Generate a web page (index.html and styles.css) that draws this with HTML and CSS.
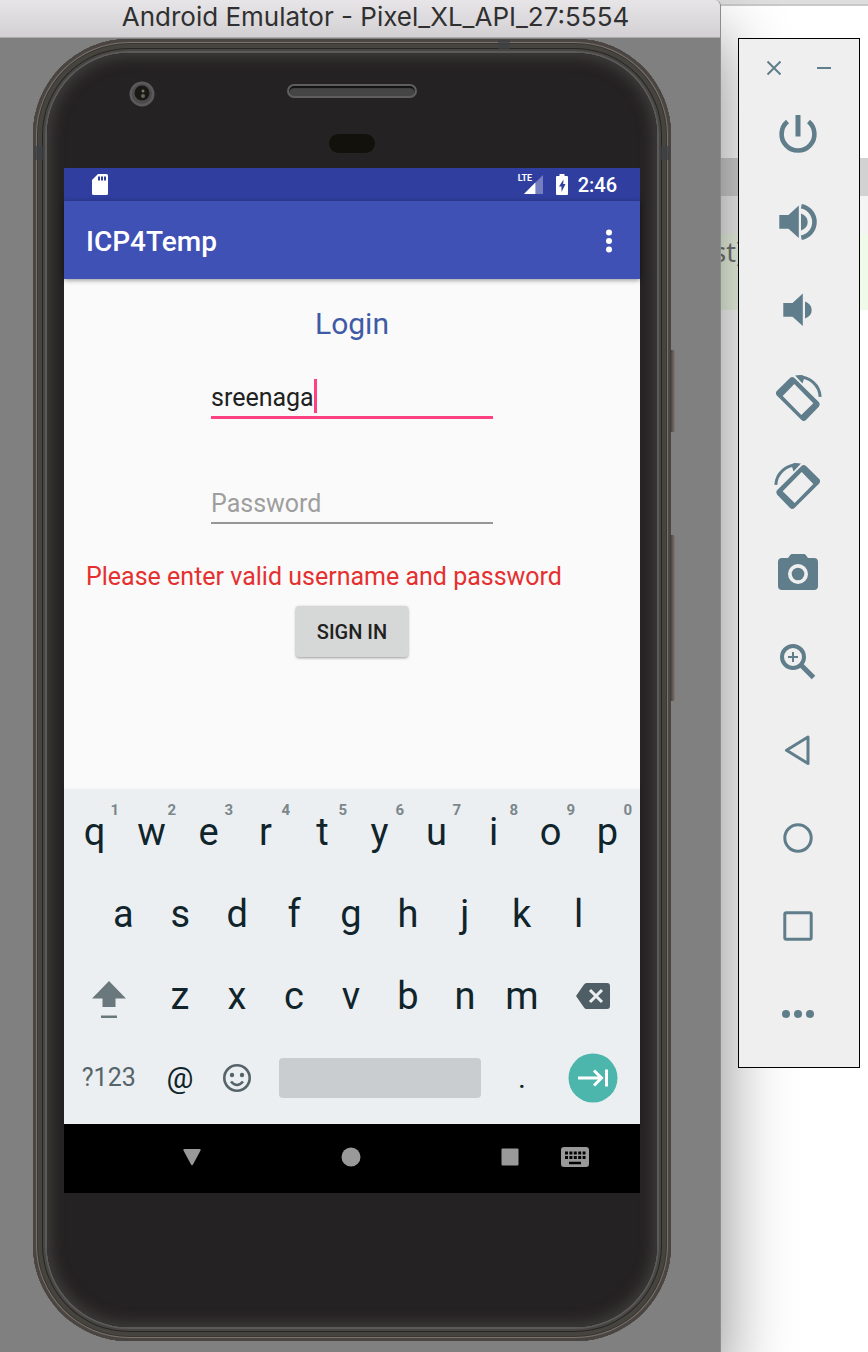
FILE: index.html
```html
<!DOCTYPE html>
<html lang="en">
<head>
<meta charset="utf-8">
<title>Android Emulator - Pixel_XL_API_27:5554</title>
<link rel="stylesheet" href="styles.css">
</head>
<body>
<div class="desktop">
  <div class="backdrop" aria-hidden="true">
    <div class="band band-top"></div>
    <div class="band band-blank"></div>
    <div class="band band-grey"></div>
    <div class="band band-light"></div>
    <div class="band band-code">st)</div>
  </div>

  <main class="window">
    <header class="titlebar">Android Emulator - Pixel_XL_API_27:5554</header>
    <div class="stage">
      <div class="phone">
        <span class="side-key side-power"></span>
        <span class="side-key side-volume"></span>
        <span class="antenna antenna-top"></span>
        <span class="antenna antenna-left"></span>
        <span class="antenna antenna-right"></span>
        <div class="glass">
        <div class="forehead">
          <svg class="front-camera" viewBox="0 0 26 26"><circle cx="13" cy="13" r="12.500" fill="#5b5a5b"/><circle cx="13" cy="13" r="10" fill="#4c4b4c"/><circle cx="13" cy="12" r="7.500" fill="#1a1813"/><circle cx="14" cy="10" r="1.500" fill="#77756c"/><circle cx="14" cy="15" r="2" fill="#66645c"/></svg>
          <span class="earpiece"></span>
          <span class="sensor"></span>
        </div>

        <div class="screen">
          <div class="statusbar">
            <svg class="sd" viewBox="0 0 16 21"><path fill="#fff" d="M6 0h8.500Q16 0 16 1.500v18Q16 21 14.500 21h-13Q0 21 0 19.500V6z"/><path fill="#303f9f" d="M6 2.500h2v4H6zM9 2.500h2v4H9zM12 2.500h2v4h-2z"/></svg>
            <span class="signal"><span class="lte">LTE</span><svg viewBox="0 0 20 20"><path fill="#757fc0" d="M20 0v20H0z"/><path fill="#fff" d="M12 8v12H0z"/></svg></span>
            <svg class="battery" viewBox="0 0 12 21"><path fill="#fff" d="M3.500 0h5v2H11q1 0 1 1v17q0 1-1 1H1q-1 0-1-1V3q0-1 1-1h2.500z"/><path fill="#303f9f" d="M7.500 5.500L3 12.500h2.500v5.500L9.500 10H7.200z"/></svg>
            <time>2:46</time>
          </div>
          <div class="appbar">
            <h1>ICP4Temp</h1>
            <button class="more" aria-label="More options"><svg viewBox="0 0 6 24"><circle cx="3" cy="3.500" r="3"/><circle cx="3" cy="12" r="3"/><circle cx="3" cy="20.500" r="3"/></svg></button>
          </div>

          <form class="login" onsubmit="return false">
            <h2>Login</h2>
            <div class="field field-user">
              <input class="input input-active" type="text" aria-label="Username" value="sreenaga">
              <span class="caret"></span>
            </div>
            <div class="field field-pass">
              <input class="input" type="password" aria-label="Password" placeholder="Password">
            </div>
            <p class="error">Please enter valid username and password</p>
            <button class="signin" type="submit">SIGN IN</button>
          </form>

          <div class="keyboard">
            <div class="keyrow">
              <button class="key">q<sup>1</sup></button><button class="key">w<sup>2</sup></button><button class="key">e<sup>3</sup></button><button class="key">r<sup>4</sup></button><button class="key">t<sup>5</sup></button><button class="key">y<sup>6</sup></button><button class="key">u<sup>7</sup></button><button class="key">i<sup>8</sup></button><button class="key">o<sup>9</sup></button><button class="key">p<sup>0</sup></button>
            </div>
            <div class="keyrow keyrow-home">
              <button class="key">a</button><button class="key">s</button><button class="key">d</button><button class="key">f</button><button class="key">g</button><button class="key">h</button><button class="key">j</button><button class="key">k</button><button class="key">l</button>
            </div>
            <div class="keyrow">
              <button class="key key-wide" aria-label="Shift"><svg class="shift" viewBox="0 0 34 38"><path fill="#6a787e" d="M17 0l17 17.500H23.500V26h-13v-8.500H0zM9 34.500h16V37H9z"/></svg></button>
              <button class="key">z</button><button class="key">x</button><button class="key">c</button><button class="key">v</button><button class="key">b</button><button class="key">n</button><button class="key">m</button>
              <button class="key key-wide" aria-label="Delete"><svg class="delete" viewBox="0 0 34 26"><path fill="#4f5e64" d="M10.500 0H31q3 0 3 3v20q0 3-3 3H10.500Q9 26 8 24.500L0 13 8 1.500Q9 0 10.500 0z"/><path d="M14 7l12 12M26 7L14 19" stroke="#eceff1" stroke-width="3"/></svg></button>
            </div>
            <div class="keyrow">
              <button class="key key-wide key-symbols">?123</button>
              <button class="key key-small">@</button>
              <button class="key" aria-label="Emoji"><svg class="emoji" viewBox="0 0 30 30"><g fill="none" stroke="#55646a" stroke-width="2.600"><circle cx="15" cy="15" r="12.700"/><path d="M9 18.500q6 7 12 0"/></g><circle cx="10" cy="12" r="2.200" fill="#55646a"/><circle cx="20" cy="12" r="2.200" fill="#55646a"/></svg></button>
              <button class="key key-space" aria-label="Space"><span class="spacebar"></span></button>
              <button class="key key-small">.</button>
              <button class="key key-wide" aria-label="Next"><svg class="next" viewBox="0 0 50 50"><circle cx="25" cy="25" r="24.500" fill="#4db6ac"/><path d="M10 25h23M26 17.500l7.500 7.500-7.500 7.500M38.500 16.500v17" fill="none" stroke="#fff" stroke-width="3"/></svg></button>
            </div>
          </div>

          <nav class="navbar">
            <div class="navkeys">
              <button aria-label="Back"><svg viewBox="0 0 30 30"><path fill="#999" d="M7 7h16q1 0 .500 1.500l-7.500 14q-1 1.500-2 0l-7.500-14Q6 7 7 7z"/></svg></button>
              <button aria-label="Home"><svg viewBox="0 0 30 30"><circle cx="15" cy="15" r="9.500" fill="#999"/></svg></button>
              <button aria-label="Recent apps"><svg viewBox="0 0 30 30"><rect x="6.500" y="6.500" width="17" height="17" rx="1" fill="#999"/></svg></button>
            </div>
            <button aria-label="Switch keyboard"><svg viewBox="0 0 30 30"><rect x="1" y="5" width="28" height="20" rx="3" fill="#999"/><path d="M5 11h20.500M5 15.500h20.500" stroke="#000" stroke-width="2.800" stroke-dasharray="3 1.400"/><path d="M9 21h12" stroke="#000" stroke-width="2.500"/></svg></button>
          </nav>
        </div>
        </div>
      </div>
    </div>
  </main>

  <aside class="tools" aria-label="Emulator controls">
    <div class="tools-head">
      <button aria-label="Close"><svg viewBox="0 0 16 16"><path d="M1.500 1.500l13 13M14.500 1.500l-13 13"/></svg></button>
      <button aria-label="Minimize"><svg viewBox="0 0 16 16"><path d="M1 8h14"/></svg></button>
    </div>
    <button class="tool" aria-label="Power"><svg viewBox="0 0 48 48"><path class="line" stroke-width="4.600" d="M13.500 11.500a16.400 16.400 0 1 0 21 0"/><path d="M21.500 5h5v21.500h-5z"/></svg></button>
    <button class="tool" aria-label="Volume up"><svg viewBox="0 0 48 48"><path d="M5.300 17h9.200L24.800 7.500v32.500L14.500 30.700H5.300zM27 15.500q6.700 2.500 6.700 8.500T27 32.500z"/><path class="line" stroke-width="4.600" d="M27.300 8.200a16 16 0 0 1 0 31.500"/></svg></button>
    <button class="tool" aria-label="Volume down"><svg viewBox="0 0 48 48"><path d="M9.300 17h9.200L28.800 7.500v32.500L18.500 30.700H9.300zM31 15.500q6.700 2.500 6.700 8.500T31 32.500z"/></svg></button>
    <button class="tool" aria-label="Rotate left"><svg viewBox="0 0 48 48"><path fill-rule="evenodd" d="M2.800 17L16 4q2.200-1.800 4.500 0L45 28.200q1.800 2 0 4.200L32 46q-2.200 2-4.500 0L2.800 21.500Q1 19 2.800 17zM8.700 22l18.600 19 12-11.700L20.300 10z"/><path class="line" stroke-width="3" d="M46.200 22.800A21 21 0 0 0 24 3"/><path d="M21 1.500L28 1l5 4-3-.200-1.500 4.700z"/></svg></button>
    <button class="tool" aria-label="Rotate right"><svg viewBox="0 0 48 48"><g transform="matrix(-1 0 0 1 48 0)"><path fill-rule="evenodd" d="M2.800 17L16 4q2.200-1.800 4.500 0L45 28.200q1.800 2 0 4.200L32 46q-2.200 2-4.500 0L2.800 21.500Q1 19 2.800 17zM8.700 22l18.600 19 12-11.700L20.300 10z"/><path class="line" stroke-width="3" d="M46.200 22.800A21 21 0 0 0 24 3"/><path d="M21 1.500L28 1l5 4-3-.200-1.500 4.700z"/></g></svg></button>
    <button class="tool" aria-label="Take screenshot"><svg viewBox="0 0 48 48"><path fill-rule="evenodd" d="M18 4h12q1 0 1.800 1L34 8h6q4 0 4 4v24q0 4-4 4H8q-4 0-4-4V12q0-4 4-4h6l2.200-3Q17 4 18 4zM24 14a10 10 0 1 0 0 20 10 10 0 1 0 0-20z"/><circle cx="24" cy="24" r="6.300"/></svg></button>
    <button class="tool" aria-label="Zoom"><svg viewBox="0 0 48 48"><circle class="line" cx="19" cy="19" r="11" stroke-width="4"/><path class="line" stroke-width="2" d="M19 14v10M14 19h10"/><path class="line" stroke-width="5" d="M27.500 27.500L39.500 39.500"/></svg></button>
    <button class="tool" aria-label="Back"><svg viewBox="0 0 48 48"><path class="line" stroke-width="3" stroke-linejoin="round" d="M12.500 24.300L34 11v26.500z"/></svg></button>
    <button class="tool" aria-label="Home"><svg viewBox="0 0 48 48"><circle class="line" cx="24" cy="24" r="13.200" stroke-width="3"/></svg></button>
    <button class="tool" aria-label="Overview"><svg viewBox="0 0 48 48"><rect class="line" x="10.800" y="10.800" width="26.400" height="26.400" rx="1.500" stroke-width="3"/></svg></button>
    <button class="tool" aria-label="More"><svg viewBox="0 0 48 48"><circle cx="12" cy="24" r="4"/><circle cx="24" cy="24" r="4"/><circle cx="36" cy="24" r="4"/></svg></button>
  </aside>
</div>
</body>
</html>
```
FILE: styles.css
```css
* { box-sizing: border-box; }

body {
  margin: 0;
  background: #fff;
  font-family: Roboto, "Liberation Sans", sans-serif;
}

h1, h2, p { margin: 0; }

button {
  margin: 0;
  padding: 0;
  border: 0;
  background: none;
  color: inherit;
  font-family: inherit;
}

svg { display: block; overflow: visible; }

.desktop {
  position: relative;
  display: flex;
  align-items: stretch;
  min-height: 100vh;
  overflow: hidden;
}

/* Editor window that lies behind the emulator */
.backdrop { position: absolute; inset: 0; }
.band-top { height: 6px; background: #dedede; border-bottom: 2px solid #c9c9c9; }
.band-blank { height: 152px; }
.band-grey { height: 38px; background: #d2d2d2; }
.band-light { height: 38px; background: #f4f4f4; }
.band-code {
  height: 76px;
  padding-right: 124px;
  background: #f0fae8;
  color: #777;
  font-family: "Noto Sans", sans-serif;
  font-size: 27px;
  line-height: 36px;
  text-align: right;
}

.window {
  position: relative;
  display: flex;
  flex: 1;
  flex-direction: column;
  min-width: 0;
  border-right: 1px solid #8c8c8c;
  border-top-right-radius: 6px;
  box-shadow: 0 36px 70px rgba(0, 0, 0, .48);
}

.titlebar {
  height: 38px;
  padding-left: 31px;
  border-bottom: 1px solid #acabac;
  border-top-right-radius: 6px;
  background: linear-gradient(#e7e5e7, #d2d0d2);
  color: #303030;
  font-family: Inter, sans-serif;
  font-size: 26px;
  line-height: 34px;
  text-align: center;
  white-space: nowrap;
}

.stage {
  flex: 1;
  padding: 1px 49px 11px 33px;
  background: #808080;
}

.phone {
  position: relative;
  padding: 14px;
  border-radius: 96px;
  background: #252223;
  box-shadow:
    inset 0 0 0 1px #4a4441,
    inset 0 0 0 3px #4c4642,
    inset 0 0 0 4px #79736f,
    inset 0 0 0 5px #3a3531,
    inset 0 0 0 9px #46443e,
    inset 0 0 0 10px #282623,
    inset 0 0 0 12px #474644,
    inset 0 0 0 14px #5b5a58;
}

.glass {
  padding: 0 17px 134px;
  border-radius: 82px;
  background: #252223;
  box-shadow: inset 0 0 14px 4px #403e3d;
}

.side-key {
  position: absolute;
  right: -5px;
  width: 6px;
  border-radius: 0 3px 3px 0;
  background: linear-gradient(90deg, #3b3634, #6e6764 60%, #8a8380);
}
.side-power { top: 311px; height: 82px; }
.side-volume { top: 496px; height: 166px; }

.antenna { position: absolute; background: rgba(62, 64, 68, .75); }
.antenna-top { top: 1px; left: 465px; width: 12px; height: 9px; }
.antenna-left { top: 107px; left: 1px; width: 10px; height: 14px; }
.antenna-right { top: 107px; right: 1px; width: 10px; height: 14px; }

.forehead {
  display: grid;
  grid-template-columns: 1fr 130px 1fr;
  grid-template-rows: 53px 19px;
  align-items: start;
  height: 115px;
  padding-top: 28px;
}
.front-camera { width: 26px; margin-left: 65px; }
.earpiece {
  height: 14px;
  margin-top: 3px;
  border: 2px solid #5f5e5f;
  border-radius: 7px;
  background: #464546;
  box-shadow: inset 0 2px 1px #111;
}
.sensor {
  grid-column: 2;
  justify-self: center;
  width: 46px;
  height: 19px;
  border-radius: 10px;
  background: #13110c;
}

.screen { background: #fafafa; }

.statusbar {
  display: flex;
  align-items: center;
  height: 33px;
  padding: 0 23px 0 28px;
  background: #303f9f;
  color: #fff;
}
.sd { width: 16px; }
.signal { position: relative; margin-left: auto; margin-right: 13px; }
.signal svg { width: 19px; }
.lte {
  position: absolute;
  top: -1px;
  left: -6px;
  font-size: 9px;
  font-weight: 700;
  line-height: 9px;
}
.battery { width: 12px; margin-right: 10px; }
.statusbar time { font-size: 20px; font-weight: 500; }

.appbar {
  position: relative;
  display: flex;
  align-items: center;
  justify-content: space-between;
  height: 78px;
  padding: 2px 28px 0 22px;
  background: #3f51b5;
  box-shadow: 0 1px 5px rgba(0, 0, 0, .45);
  color: #fff;
}
.appbar h1 { font-size: 28px; font-weight: 500; }
.more svg { width: 6px; fill: #fff; }

.login {
  display: flex;
  flex-direction: column;
  align-items: center;
  height: 511px;
  padding: 27px 22px 0;
}
.login h2 {
  color: #3f5aa6;
  font-size: 30px;
  font-weight: 400;
  line-height: 36px;
}
.field { position: relative; width: 53%; }
.field-user { margin-top: 34px; }
.field-pass { margin-top: 62px; }
.input {
  display: block;
  width: 100%;
  height: 43px;
  padding: 4px 0 0;
  border: 0;
  border-bottom: 2px solid #969696;
  border-radius: 0;
  outline: 0;
  background: transparent;
  color: #212121;
  font-family: inherit;
  font-size: 25px;
}
.input-active { padding-top: 2px; border-bottom: 3px solid #ff4081; }
.input::placeholder { color: #9e9e9e; opacity: 1; }
.caret {
  position: absolute;
  top: 3px;
  left: 103px;
  width: 3px;
  height: 34px;
  background: #ff4081;
}
.error {
  align-self: flex-start;
  margin-top: 38px;
  color: #e53030;
  font-size: 25px;
  line-height: 30px;
}
.signin {
  width: 112px;
  height: 51px;
  margin-top: 14px;
  border-radius: 3px;
  background: #d6d8d7;
  box-shadow: 0 1px 3px rgba(0, 0, 0, .4);
  color: #212121;
  font-size: 20px;
  font-weight: 500;
}

.keyboard {
  padding: 1px 4px 5px 2px;
  background: #eceff1;
  box-shadow: 0 -1px 2px rgba(0, 0, 0, .06);
  color: #10242c;
}
.keyrow { display: flex; height: 82px; }
.keyrow-home { padding: 0 29px; }
.key {
  position: relative;
  display: flex;
  flex: 2;
  align-items: center;
  justify-content: center;
  min-width: 0;
  font-size: 38px;
  line-height: 44px;
}
.key-wide { flex: 3; }
.key-space { flex: 8; }
.key sup {
  position: absolute;
  top: 10px;
  right: 4px;
  color: #7b878b;
  font-size: 15px;
  font-weight: 700;
  line-height: 18px;
}
.key-symbols { color: #55646a; font-size: 25px; }
.key-small { font-size: 30px; }
.shift { width: 34px; margin-top: 8px; }
.delete { width: 34px; }
.emoji { width: 30px; }
.spacebar {
  flex: 1;
  height: 40px;
  margin: 0 13px;
  border-radius: 4px;
  background: #c9cdd0;
}
.next { width: 50px; }

.navbar {
  display: flex;
  align-items: center;
  gap: 35px;
  height: 69px;
  padding: 0 50px 3px 113px;
  background: #000;
}
.navkeys { display: flex; flex: 1; justify-content: space-between; }
.navbar svg { width: 30px; }

/* Floating emulator toolbar */
.tools {
  position: relative;
  flex: none;
  align-self: flex-start;
  width: 122px;
  margin: 38px 8px 0 17px;
  padding-bottom: 9px;
  border: 1px solid #000;
  background: #efefef;
  color: #607d8b;
}
.tools-head {
  display: flex;
  height: 51px;
  padding: 7px 10px 0;
}
.tools-head button {
  display: flex;
  flex: 1;
  align-items: center;
  justify-content: center;
}
.tools-head svg { width: 16px; fill: none; stroke: #607d8b; stroke-width: 2; }
.tool {
  display: flex;
  align-items: center;
  justify-content: center;
  width: 100%;
  height: 88px;
  padding-right: 2px;
}
.tool svg { width: 48px; fill: #607d8b; }
.tool .line { fill: none; stroke: #607d8b; }
```
